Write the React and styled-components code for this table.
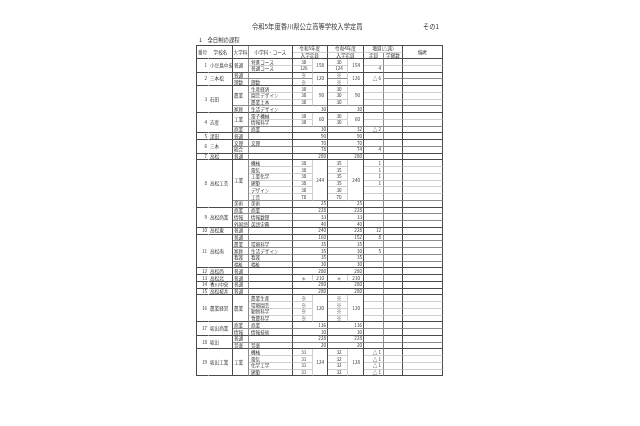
import React from "react";
import styled, { createGlobalStyle, css } from "styled-components";

const DARK = "#4a4a4a";
const MID = "#8c8c8c";
const LIGHT = "#cfcfcf";

const edgeColor = { school: DARK, dai: MID, sub: LIGHT };

const GlobalStyle = createGlobalStyle`
  html, body {
    margin: 0;
    padding: 0;
    background: #ffffff;
  }
  body {
    font-family: "Noto Sans CJK JP", "Noto Sans", sans-serif;
    color: #333333;
  }
`;

const Page = styled.div`
  width: 640px;
  height: 426px;
  box-sizing: border-box;
  padding: 23px 0 0 196px;
  overflow: hidden;
  will-change: transform;
`;

const Sheet = styled.div`
  width: 246px;
`;

const TitleRow = styled.div`
  display: flex;
  align-items: center;
  height: 8px;
  padding: 0 3px 0 56px;
  font-size: 6.3px;
  line-height: 8px;
`;

const Title = styled.h1`
  margin: 0;
  font-size: inherit;
  font-weight: normal;
`;

const SheetNo = styled.span`
  margin-left: auto;
`;

const Section = styled.div`
  margin-top: 6px;
  padding-left: 3px;
  height: 6px;
  font-size: 5.4px;
  line-height: 6px;
`;

const Table = styled.table`
  margin-top: 2px;
  border-collapse: separate;
  border-spacing: 0;
  table-layout: fixed;
  width: 246px;
  border-top: 1px solid ${DARK};
  border-left: 1px solid ${DARK};
  font-size: 4.6px;
  line-height: 4.6px;
`;

const Col = styled.col`
  width: ${(p) => p.$w}px;
`;

const HeadRow = styled.tr`
  height: 6.5px;
`;

const BodyRow = styled.tr`
  height: 6.75px;
`;

const cellBase = css`
  box-sizing: border-box;
  padding: 0;
  white-space: nowrap;
  overflow: hidden;
  vertical-align: middle;
  border-bottom: 1px solid ${(p) => edgeColor[p.$edge] || LIGHT};
`;

const HeadCell = styled.th`
  ${cellBase};
  font-weight: normal;
  text-align: center;
  border-right: 1px solid ${(p) => p.$right || DARK};
`;

const NumCell = styled.td`
  ${cellBase};
  text-align: right;
  padding-right: 1px;
  border-right: 1px solid transparent;
`;

const NameCell = styled.td`
  ${cellBase};
  text-align: left;
  padding-left: 1px;
  border-right: 1px solid ${DARK};
`;

const DeptCell = styled.td`
  ${cellBase};
  text-align: left;
  padding-left: 1px;
  border-right: 1px solid ${MID};
`;

const CourseCell = styled.td`
  ${cellBase};
  text-align: left;
  padding-left: 2px;
  border-right: 1px solid ${DARK};
`;

const CountCell = styled.td`
  ${cellBase};
  text-align: center;
  padding-left: 3px;
  border-right: 1px solid ${LIGHT};
`;

const TotalCell = styled.td`
  ${cellBase};
  text-align: right;
  padding-right: 3px;
  border-right: 1px solid ${DARK};
`;

const WideCell = styled.td`
  ${cellBase};
  text-align: right;
  padding-right: 1px;
  border-right: 1px solid ${DARK};
`;

const DiffCell = styled.td`
  ${cellBase};
  text-align: right;
  padding-right: 2px;
  border-right: 1px solid ${MID};
`;

const ClassCell = styled.td`
  ${cellBase};
  border-right: 1px solid ${DARK};
`;

const NoteCell = styled.td`
  ${cellBase};
  border-right: 1px solid ${DARK};
`;

const colWidths = [12, 24, 16, 43.5, 20.5, 15, 20, 16, 20, 19, 40];

const schools = [
  {
    no: "1",
    name: "小豆島中央",
    rows: [
      { d: ["普通", 2], s: "特進コース", a: { i: "30", t: "158", n: 2 }, b: { i: "30", t: "154", n: 2 } },
      { s: "普通コース", a: { i: "126" }, b: { i: "124" }, z: "4" },
    ],
  },
  {
    no: "2",
    name: "三本松",
    rows: [
      { d: ["普通", 1], s: "", a: { i: "※", t: "120", n: 2 }, b: { i: "※", t: "126", n: 2 }, z: { v: "△ 6", n: 2 } },
      { d: ["理数", 1], s: "理数", a: { i: "※" }, b: { i: "※" }, z: null },
    ],
  },
  {
    no: "3",
    name: "石田",
    rows: [
      { d: ["農業", 3], s: "生産経済", a: { i: "30", t: "90", n: 3 }, b: { i: "30", t: "90", n: 3 } },
      { s: "園芸デザイン", a: { i: "30" }, b: { i: "30" } },
      { s: "農業土木", a: { i: "30" }, b: { i: "30" } },
      { d: ["家庭", 1], s: "生活デザイン", a: { w: "30" }, b: { w: "30" } },
    ],
  },
  {
    no: "4",
    name: "志度",
    rows: [
      { d: ["工業", 2], s: "電子機械", a: { i: "30", t: "60", n: 2 }, b: { i: "30", t: "60", n: 2 } },
      { s: "情報科学", a: { i: "30" }, b: { i: "30" } },
      { d: ["商業", 1], s: "商業", a: { w: "30" }, b: { w: "32" }, z: "△ 2" },
    ],
  },
  { no: "5", name: "津田", rows: [{ d: ["普通", 1], s: "", a: { w: "90" }, b: { w: "90" } }] },
  {
    no: "6",
    name: "三木",
    rows: [
      { d: ["文理", 1], s: "文理", a: { w: "70" }, b: { w: "70" } },
      { d: ["総合", 1], s: "", a: { w: "78" }, b: { w: "74" }, z: "4" },
    ],
  },
  { no: "7", name: "高松", rows: [{ d: ["普通", 1], s: "", a: { w: "280" }, b: { w: "280" } }] },
  {
    no: "8",
    name: "高松工芸",
    rows: [
      { d: ["工業", 6], s: "機械", a: { i: "38", t: "244", n: 6 }, b: { i: "35", t: "240", n: 6 }, z: "1" },
      { s: "電気", a: { i: "38" }, b: { i: "35" }, z: "1" },
      { s: "工業化学", a: { i: "38" }, b: { i: "35" }, z: "1" },
      { s: "建築", a: { i: "38" }, b: { i: "35" }, z: "1" },
      { s: "デザイン", a: { i: "30" }, b: { i: "30" } },
      { s: "工芸", a: { i: "70" }, b: { i: "70" } },
      { d: ["美術", 1], s: "美術", a: { w: "25" }, b: { w: "25" } },
    ],
  },
  {
    no: "9",
    name: "高松商業",
    rows: [
      { d: ["商業", 1], s: "商業", a: { w: "228" }, b: { w: "228" } },
      { d: ["情報", 1], s: "情報数理", a: { w: "33" }, b: { w: "33" } },
      { d: ["外国語", 1], s: "英語実務", a: { w: "40" }, b: { w: "40" } },
    ],
  },
  { no: "10", name: "高松東", rows: [{ d: ["普通", 1], s: "", a: { w: "240" }, b: { w: "228" }, z: "12" }] },
  {
    no: "11",
    name: "高松南",
    rows: [
      { d: ["普通", 1], s: "", a: { w: "160" }, b: { w: "152" }, z: "8" },
      { d: ["農業", 1], s: "環境科学", a: { w: "35" }, b: { w: "35" } },
      { d: ["家庭", 1], s: "生活デザイン", a: { w: "35" }, b: { w: "30" }, z: "5" },
      { d: ["看護", 1], s: "看護", a: { w: "35" }, b: { w: "35" } },
      { d: ["福祉", 1], s: "福祉", a: { w: "30" }, b: { w: "30" } },
    ],
  },
  { no: "12", name: "高松西", rows: [{ d: ["普通", 1], s: "", a: { w: "280" }, b: { w: "280" } }] },
  {
    no: "13",
    name: "高松北",
    rows: [{ d: ["普通", 1], s: "", a: { i: "＊", t: "210", n: 1 }, b: { i: "＊", t: "210", n: 1 } }],
  },
  { no: "14", name: "香川中央", rows: [{ d: ["普通", 1], s: "", a: { w: "280" }, b: { w: "280" } }] },
  { no: "15", name: "高松桜井", rows: [{ d: ["普通", 1], s: "", a: { w: "280" }, b: { w: "280" } }] },
  {
    no: "16",
    name: "農業経営",
    rows: [
      { d: ["農業", 4], s: "農業生産", a: { i: "※", t: "120", n: 4 }, b: { i: "※", t: "120", n: 4 } },
      { s: "環境園芸", a: { i: "※" }, b: { i: "※" } },
      { s: "動物科学", a: { i: "※" }, b: { i: "※" } },
      { s: "食農科学", a: { i: "※" }, b: { i: "※" } },
    ],
  },
  {
    no: "17",
    name: "坂出商業",
    rows: [
      { d: ["商業", 1], s: "商業", a: { w: "136" }, b: { w: "136" } },
      { d: ["情報", 1], s: "情報技術", a: { w: "30" }, b: { w: "30" } },
    ],
  },
  {
    no: "18",
    name: "坂出",
    rows: [
      { d: ["普通", 1], s: "", a: { w: "228" }, b: { w: "228" } },
      { d: ["音楽", 1], s: "音楽", a: { w: "20" }, b: { w: "20" } },
    ],
  },
  {
    no: "19",
    name: "坂出工業",
    rows: [
      { d: ["工業", 4], s: "機械", a: { i: "31", t: "124", n: 4 }, b: { i: "32", t: "128", n: 4 }, z: "△ 1" },
      { s: "電気", a: { i: "31" }, b: { i: "32" }, z: "△ 1" },
      { s: "化学工学", a: { i: "31" }, b: { i: "32" }, z: "△ 1" },
      { s: "建築", a: { i: "31" }, b: { i: "32" }, z: "△ 1" },
    ],
  },
];

function edgeAt(rows, idx) {
  if (idx >= rows.length - 1) return "school";
  return rows[idx + 1].d ? "dai" : "sub";
}

function YearCells({ spec, rows, idx }) {
  const edge = edgeAt(rows, idx);
  if (spec.w !== undefined) {
    return (
      <WideCell colSpan={2} $edge={edge}>
        {spec.w}
      </WideCell>
    );
  }
  return (
    <>
      <CountCell $edge={edge}>{spec.i}</CountCell>
      {spec.t !== undefined && (
        <TotalCell rowSpan={spec.n} $edge={edgeAt(rows, idx + spec.n - 1)}>
          {spec.t}
        </TotalCell>
      )}
    </>
  );
}

function SchoolRows({ school }) {
  const { rows } = school;
  return rows.map((r, idx) => {
    const edge = edgeAt(rows, idx);
    let diff = null;
    if (r.z === null) {
      diff = null;
    } else if (r.z && typeof r.z === "object") {
      diff = (
        <DiffCell rowSpan={r.z.n} $edge={edgeAt(rows, idx + r.z.n - 1)}>
          {r.z.v}
        </DiffCell>
      );
    } else {
      diff = <DiffCell $edge={edge}>{r.z || ""}</DiffCell>;
    }
    return (
      <BodyRow key={idx}>
        {idx === 0 && (
          <>
            <NumCell rowSpan={rows.length} $edge="school">
              {school.no}
            </NumCell>
            <NameCell rowSpan={rows.length} $edge="school">
              {school.name}
            </NameCell>
          </>
        )}
        {r.d && (
          <DeptCell rowSpan={r.d[1]} $edge={edgeAt(rows, idx + r.d[1] - 1)}>
            {r.d[0]}
          </DeptCell>
        )}
        <CourseCell $edge={edge}>{r.s}</CourseCell>
        <YearCells spec={r.a} rows={rows} idx={idx} />
        <YearCells spec={r.b} rows={rows} idx={idx} />
        {diff}
        <ClassCell $edge={edge} />
        <NoteCell $edge={edge} />
      </BodyRow>
    );
  });
}

export default function App() {
  return (
    <>
      <GlobalStyle />
      <Page>
        <Sheet>
          <TitleRow>
            <Title>令和5年度香川県公立高等学校入学定員</Title>
            <SheetNo>その1</SheetNo>
          </TitleRow>
          <Section>1　全日制の課程</Section>
          <Table>
            <colgroup>
              {colWidths.map((w, i) => (
                <Col key={i} $w={w} />
              ))}
            </colgroup>
            <thead>
              <HeadRow>
                <HeadCell rowSpan={2} $edge="school" $right="transparent">
                  番号
                </HeadCell>
                <HeadCell rowSpan={2} $edge="school">
                  学校名
                </HeadCell>
                <HeadCell rowSpan={2} $edge="school" $right={MID}>
                  大学科
                </HeadCell>
                <HeadCell rowSpan={2} $edge="school">
                  小学科・コース
                </HeadCell>
                <HeadCell colSpan={2} $edge="sub">
                  令和5年度
                </HeadCell>
                <HeadCell colSpan={2} $edge="sub">
                  令和4年度
                </HeadCell>
                <HeadCell colSpan={2} $edge="sub">
                  増減(△減)
                </HeadCell>
                <HeadCell rowSpan={2} $edge="school">
                  備考
                </HeadCell>
              </HeadRow>
              <HeadRow>
                <HeadCell colSpan={2} $edge="school">
                  入学定員
                </HeadCell>
                <HeadCell colSpan={2} $edge="school">
                  入学定員
                </HeadCell>
                <HeadCell $edge="school" $right={MID}>
                  定員
                </HeadCell>
                <HeadCell $edge="school">学級数</HeadCell>
              </HeadRow>
            </thead>
            <tbody>
              {schools.map((s) => (
                <SchoolRows key={s.no} school={s} />
              ))}
            </tbody>
          </Table>
        </Sheet>
      </Page>
    </>
  );
}
